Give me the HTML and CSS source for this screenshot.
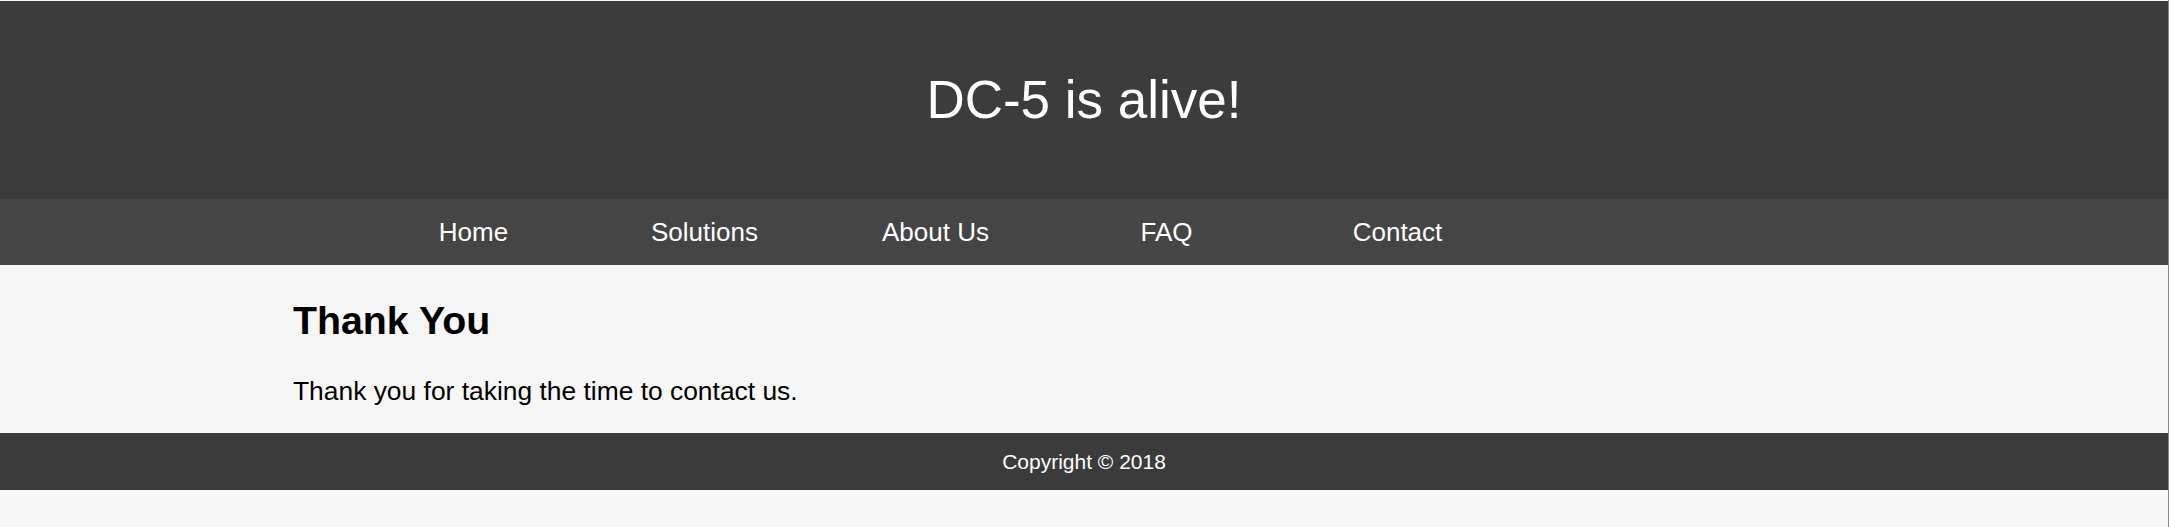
FILE: index.html
```html
<!DOCTYPE html>
<html lang="en">
<head>
    <meta charset="UTF-8">
    <meta name="viewport" content="width=device-width, initial-scale=1.0">
    <title>DC-5 is alive!</title>
    <link rel="stylesheet" href="styles.css">
</head>
<body>
    <div class="header">
        <h1>DC-5 is alive!</h1>
    </div>

    <div class="menu">
        <ul class="nav">
            <li><a href="index.php">Home</a></li>
            <li><a href="solutions.php">Solutions</a></li>
            <li><a href="about-us.php">About Us</a></li>
            <li><a href="faq.php">FAQ</a></li>
            <li><a href="contact.php">Contact</a></li>
        </ul>
    </div>

    <div class="content">
        <h2>Thank You</h2>
        <p>Thank you for taking the time to contact us.</p>
    </div>

    <div class="footer">
        Copyright &copy; 2018
    </div>
</body>
</html>
```

FILE: styles.css
```css
html {
    height: 100%;
}
body {
    font-family: "Liberation Sans", Arial, sans-serif;
    margin: 0;
    padding-top: 1px;
    min-height: 100%;
    box-sizing: border-box;
    background-color: #f6f6f6;
    border-right: 1px solid #8d8884;
}
.header {
    background-color: #3c3c3c;
    color: #fff;
    text-align: center;
    padding: 68px 0 69px;
}
.header h1 {
    margin: 0;
    font-size: 53px;
    font-weight: normal;
    line-height: 61px;
}
.menu {
    background-color: #454545;
}
.nav {
    list-style: none;
    margin: 0 auto;
    padding: 0 0 0 65px;
    width: 1582px;
    box-sizing: border-box;
    display: flex;
}
.nav li {
    width: 231px;
    text-align: center;
}
.nav a {
    display: block;
    color: #fff;
    text-decoration: none;
    font-size: 26px;
    line-height: 66px;
}
.content {
    width: 1582px;
    margin: 0 auto;
    padding: 33px 0 27px;
}
.content h2 {
    font-size: 39.3px;
    line-height: 45px;
    margin: 0 0 33px;
    color: #000;
}
.content p {
    font-size: 26.4px;
    line-height: 30px;
    margin: 0;
    color: #000;
}
.footer {
    background-color: #3b3b3b;
    color: #fff;
    text-align: center;
    font-size: 21px;
    padding: 17px 0 16px;
}
```
